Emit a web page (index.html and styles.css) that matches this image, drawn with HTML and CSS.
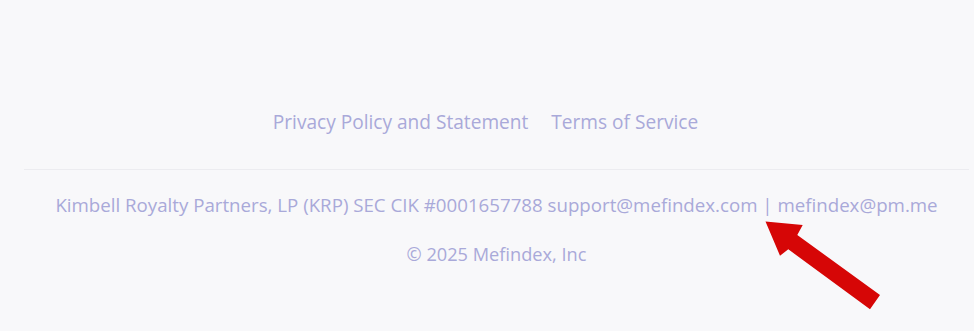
FILE: index.html
```html
<!DOCTYPE html>
<html lang="en">
<head>
<meta charset="utf-8">
<title>Footer</title>
<link rel="stylesheet" href="styles.css">
</head>
<body>
<footer class="footer">
  <nav class="links">
    <a href="#" class="link">Privacy Policy and Statement</a>
    <a href="#" class="link">Terms of Service</a>
  </nav>
  <div class="bottom">
    <p class="info">Kimbell Royalty Partners, LP (KRP) SEC CIK #0001657788 support@mefindex.com | mefindex@pm.me</p>
    <p class="copy">© 2025 Mefindex, Inc</p>
  </div>
</footer>
<svg class="arrow" width="974" height="331" viewBox="0 0 974 331" aria-hidden="true">
  <polygon points="765.5,221.5 802.7,225 797.3,235 880,295 870,309.3 788.3,249.3 780,255.7" fill="#d60606"/>
</svg>
</body>
</html>
```
FILE: styles.css
```css
html, body {
  margin: 0;
  padding: 0;
  background: #f8f8fa;
}
body {
  width: 974px;
  height: 331px;
  overflow: hidden;
  position: relative;
  font-family: "Open Sans", "Noto Sans", sans-serif;
  color: #a9a9d9;
}
.footer {
  padding-top: 110px;
  display: flex;
  flex-direction: column;
}
.links {
  display: flex;
  justify-content: center;
  gap: 23px;
  height: 24px;
  align-items: center;
  padding-right: 3px;
}
.link {
  color: #a9a9d9;
  text-decoration: none;
  font-size: 19.1px;
  line-height: 24px;
}
.bottom {
  margin: 35px 5px 0 24px;
  border-top: 1px solid #ececf0;
  display: flex;
  flex-direction: column;
  align-items: center;
}
.info {
  margin: 23px 0 0;
  font-size: 18.7px;
  line-height: 24px;
}
.copy {
  margin: 25px 0 0;
  font-size: 18.2px;
  line-height: 24px;
}
.arrow {
  position: absolute;
  left: 0;
  top: 0;
}
```
